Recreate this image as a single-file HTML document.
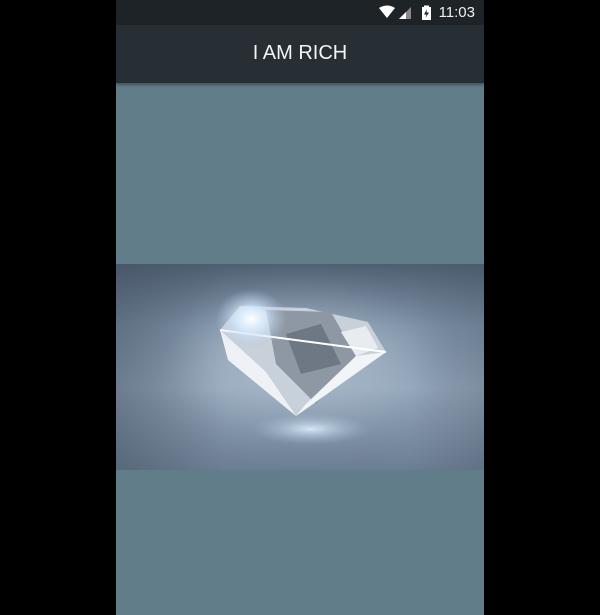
<!DOCTYPE html>
<html><head><style>
html,body{margin:0;padding:0;background:#000;width:600px;height:615px;overflow:hidden}
.ph{position:absolute;left:116px;top:0;width:368px;height:615px;background:#617d8a}
.sb{position:absolute;left:0;top:0;width:368px;height:25px;background:#1e2327}
.ab{position:absolute;left:0;top:25px;width:368px;height:58px;background:#272e34;box-shadow:0 2px 3px rgba(0,0,0,.35)}
.ab span{position:absolute;left:0;right:0;top:17px;text-align:center;color:#f4f4f4;font:20px "Liberation Sans",sans-serif}
.tm{position:absolute;right:9px;top:4px;color:#f0f0f0;font:15px "Liberation Sans",sans-serif}
svg{position:absolute}
</style></head><body>
<div class="ph">
<div class="sb">
<svg style="left:261px;top:5px" width="60" height="16" viewBox="0 0 60 16">
<path d="M2 3 Q10 -2 18 3 L10 13 Z" fill="#fff"/>
<path d="M22 14 L34 2 L34 14 Z" fill="#888"/>
<path d="M22 14 L29 7 L29 14 Z" fill="#fff"/>
<rect x="45" y="2" width="9" height="13" fill="#fff"/>
<rect x="47" y="0.5" width="5" height="2" fill="#fff"/>
<path d="M50 4 L47 9.5 L49.5 9.5 L48.5 13 L52 7.5 L49.5 7.5 Z" fill="#1e2327"/>
</svg>
<div class="tm">11:03</div>
</div>
<div class="ab"><span>I AM RICH</span></div>
<svg style="left:0;top:264px" width="368" height="206" viewBox="0 0 368 206">
<defs>
<linearGradient id="bg" x1="0" y1="0" x2="0" y2="1">
<stop offset="0" stop-color="#4f5f72"/><stop offset=".3" stop-color="#7b8ea3"/><stop offset=".6" stop-color="#92a4b8"/><stop offset="1" stop-color="#6c7e93"/>
</linearGradient>
<linearGradient id="sd" x1="0" y1="0" x2="1" y2="0">
<stop offset="0" stop-color="#3e4c5c" stop-opacity=".45"/><stop offset=".3" stop-color="#3e4c5c" stop-opacity="0"/><stop offset=".8" stop-color="#3e4c5c" stop-opacity="0"/><stop offset="1" stop-color="#3e4c5c" stop-opacity=".25"/>
</linearGradient>
<radialGradient id="gl" cx=".5" cy=".5" r=".5"><stop offset="0" stop-color="#fff"/><stop offset=".4" stop-color="#d8ecff" stop-opacity=".8"/><stop offset="1" stop-color="#b0c8e0" stop-opacity="0"/></radialGradient>
<radialGradient id="rf" cx=".5" cy=".5" r=".5"><stop offset="0" stop-color="#e0f0ff" stop-opacity=".9"/><stop offset="1" stop-color="#a0b8d0" stop-opacity="0"/></radialGradient>
<filter id="bl" x="-50%" y="-50%" width="200%" height="200%"><feGaussianBlur stdDeviation="25"/></filter>
</defs>
<rect width="368" height="206" fill="url(#bg)"/>
<rect width="368" height="206" fill="url(#sd)"/>
<ellipse cx="184" cy="95" rx="110" ry="55" fill="#b8c8d8" opacity=".5" filter="url(#bl)"/>
<ellipse cx="195" cy="165" rx="60" ry="16" fill="url(#rf)"/>
<path d="M104 66 L124 42 L190 44 L252 58 L270 88 L180 152 Z" fill="#c8d0da"/>
<path d="M150 46 L215 48 L240 92 L200 140 L160 100 Z" fill="#8e98a4"/>
<path d="M104 66 L112 96 L180 152 L150 108 Z" fill="#eef2f6"/>
<path d="M270 88 L240 92 L190 140 L180 152 Z" fill="#f2f5f8"/>
<path d="M170 70 L205 60 L225 100 L185 110 Z" fill="#6e7884"/>
<path d="M225 68 L250 62 L262 84 L240 92 Z" fill="#e8ecf0"/>
<path d="M104 66 L270 88" stroke="#fff" stroke-width="2" fill="none"/>
<ellipse cx="135" cy="55" rx="36" ry="30" fill="url(#gl)"/>
</svg>
</div>
</body></html>
